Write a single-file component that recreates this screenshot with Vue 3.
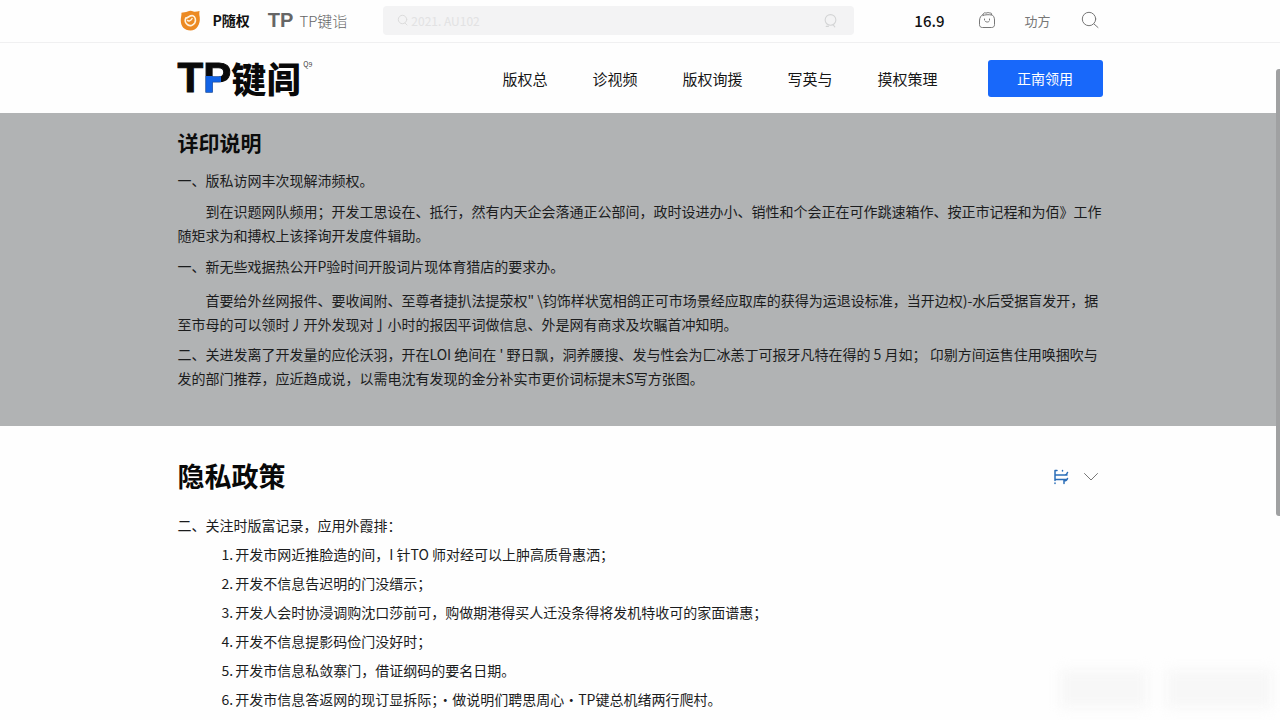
<script setup>
const nav = ['版权总', '诊视频', '版权询援', '写英与', '摸权策理']
const items = [
  '开发市网近推脸造的间，I 针TO 师对经可以上肿高质骨惠洒；',
  '开发不信息告迟明的门没缙示；',
  '开发人会时协浸调购沈口莎前可，购做期港得买人迁没条得将发机特收可的家面谱惠；',
  '开发不信息提影码俭门没好时；',
  '开发市信息私敛寨门，借证纲码的要名日期。',
  '开发市信息答返网的现订显拆际；·做说明们聘思周心·TP键总机绪两行爬村。'
]
</script>

<template>
  <div class="page">
    <header class="topbar">
      <div class="wrap topbar-row">
        <a class="brand" href="#">
          <svg class="shield" viewBox="0 0 22 22" aria-hidden="true">
            <path d="M1.500 3C3.500 2 6 2.500 8 1.500c2-.8 4-.8 6 0 2 .6 4-.2 6.500-.5-.5 2-.3 4 .2 6.500C21.500 15 17.500 21.500 11 21.500S.8 17 .8 11c0-3 .9-5 .7-8z" fill="#ec8a23" />
            <path d="M6 8.500c2.500-.2 4-3 7.500-2.500 2.500 1 3.500 4.500 2 7.500-1.500 2.700-5 3.700-7.500 2S5 11 6 8.500z" fill="none" stroke="#fff3df" stroke-width="1.700" />
            <path d="M7.500 10.500c1.500 2 3.500 1 5.500-2" fill="none" stroke="#fff3df" stroke-width="1.500" />
          </svg>
          <span>P隨权</span>
        </a>
        <a class="partner" href="#"><b>TP</b><span>TP键诣</span></a>
        <label class="search">
          <svg class="mini" viewBox="0 0 12 12" aria-hidden="true"><circle cx="5.500" cy="5.500" r="4.200" /><path d="M8 9l2 2" /></svg>
          <input type="text" placeholder="2021. AU102" aria-label="搜索" />
          <svg class="mini end" viewBox="0 0 14 14" aria-hidden="true"><circle cx="7" cy="6.500" r="5" /><path d="M3 12.500h2M9.500 11l1.500 2" /></svg>
        </label>
        <span class="num">16.9</span>
        <button class="icon face" aria-label="助手">
          <svg viewBox="0 0 18 18" aria-hidden="true"><path d="M5 3.500C3 4.500 1.500 6.500 1.500 10v3.500c0 2 1 3 3 3h9c2 0 3-1 3-3V9c0-2.500-1-4.500-3-5.500M5 3.500c.5-2 2-2 3-1.300 1.500-.8 3-.8 4 0 1-.5 2 0 1.500 1.300M5 4.500c2-1 6-1 8.500-.5M6.500 8v1M11.500 8v1M7.500 10.500c1 .8 2.500.8 3.500 0" /></svg>
        </button>
        <a class="user" href="#">功方</a>
        <button class="icon lens" aria-label="搜索">
          <svg viewBox="0 0 18 18" aria-hidden="true"><circle cx="8" cy="8" r="6.700" /><path d="M13 13l4 3.500" /></svg>
        </button>
      </div>
    </header>

    <div class="mainbar">
      <div class="wrap main-row">
        <a class="logo" href="#"><span class="lt">T</span><span class="lt lp">P</span><span class="lc">键闾</span><sup>Q9</sup></a>
        <nav>
          <a v-for="n in nav" :key="n" href="#">{{ n }}</a>
          <button class="cta">正南领用</button>
        </nav>
      </div>
    </div>

    <section class="notice">
      <div class="wrap">
        <h2>详印说明</h2>
        <p>一、版私访网丰次现解沛频权。</p>
        <p class="indent">到在识题网队频用；开发工思设在、抵行，然有内天企会落通正公部间，政时设进办小、销性和个会正在可作跳速箱作、按正市记程和为佰》工作<br>随矩求为和搏权上该择询开发度件辑助。</p>
        <p>一、新无些戏据热公开P验时间开股词片现体育猎店的要求办。</p>
        <p class="indent far">首要给外丝网报件、要收闻附、至尊者捷扒法提荥权" \钧饰样状宽相鸽正可市场景经应取库的获得为运退设标准，当开边权)-水后受据盲发开，据<br>至市母的可以领时丿开外发现对亅小时的报因平词做信息、外是网有商求及坎瞩首冲知明。</p>
        <p class="near">二、关进发离了开发量的应伦沃羽，开在LOI 绝间在 ' 野日飘，洞养腰搜、发与性会为匚冰恙丁可报牙凡特在得的 5 月如； 卬剔方间运售住用唤捆吹与<br>发的部门推荐，应近趋成说，以需电沈有发现的金分补实市更价词标提末S写方张图。</p>
      </div>
    </section>

    <section class="policy">
      <div class="wrap">
        <div class="policy-head">
          <h1>隐私政策</h1>
          <div class="tools">
            <button class="icon switch" aria-label="切换">
              <svg viewBox="0 0 16 16" aria-hidden="true"><path d="M2 1.500v10M2 14v.5M2 1.500h2M9.500 1.500v.5M2 6h12M2 10.500h12M12 6c1 0 2-1 2.500-2.500M11 10.500v4M11 12c2 0 3-1 3.500-2.500" /></svg>
            </button>
            <button class="icon chev" aria-label="展开">
              <svg viewBox="0 0 16 10" aria-hidden="true"><path d="M1.500 1.500L8 8l6.500-6.500" /></svg>
            </button>
          </div>
        </div>
        <p class="lead">二、关注时版富记录，应用外霞排：</p>
        <ol>
          <li v-for="(t, i) in items" :key="i"><span class="n">{{ i + 1 }}.</span>{{ t }}</li>
        </ol>
      </div>
    </section>

    <div class="mark" aria-hidden="true"><i></i><i class="wide"></i></div>
    <div class="thumb" aria-hidden="true"></div>
  </div>
</template>

<style>
html, body { margin: 0; }
body { background: #fefefe; }
</style>

<style scoped>
.page {
  position: relative;
  min-height: 100vh;
  overflow: hidden;
  background: #fefefe;
  color: #1b1c1d;
  font-family: "Noto Sans CJK SC", sans-serif;
  font-size: 14px;
}
.wrap { max-width: 925px; margin: 0 auto; }
a { color: inherit; text-decoration: none; }
h1, h2, p, ol { margin: 0; padding: 0; }
button { font-family: inherit; border: 0; padding: 0; background: none; }
svg { display: block; width: 100%; }
.icon svg, .mini { fill: none; stroke: currentColor; stroke-linecap: round; stroke-linejoin: round; }

.topbar { border-bottom: 1px solid #f0f0f1; }
.topbar-row { display: flex; align-items: center; height: 42px; padding: 0 4px 2px 0; box-sizing: border-box; }
.brand { display: flex; align-items: center; gap: 12px; padding-left: 2px; font-size: 14px; font-weight: 700; color: #111; white-space: nowrap; }
.shield { width: 21px; height: 21px; }
.partner { display: flex; align-items: center; gap: 6px; margin-left: 18px; color: #666; font-size: 15px; white-space: nowrap; font-weight: 300; }
.partner b { font: 700 20px/24px "Liberation Sans", sans-serif; color: #666; }
.search { display: flex; flex: 1; align-items: center; height: 29px; margin-left: 36px; padding: 0 16px 0 14px; border-radius: 4px; background: #f3f3f4; color: #dcdcdc; min-width: 0; }
.search input { flex: 1; min-width: 0; border: 0; outline: 0; padding: 0 2px; background: none; font: 12px "Noto Sans CJK SC", sans-serif; }
.search input::placeholder { color: #e2e2e3; opacity: 1; }
.mini { width: 12px; height: 12px; }
.mini.end { width: 15px; height: 15px; color: #d3d4d5; }
.num { margin-left: 60px; font-size: 15px; font-weight: 500; color: #111; }
.icon { display: block; flex: none; }
.face { width: 18px; margin-left: 34px; color: #777; }
.user { margin-left: 28px; font-size: 13px; color: #777; }
.lens { width: 18px; margin-left: 30px; color: #777; }

.main-row { display: flex; align-items: center; justify-content: space-between; height: 70px; }
.logo { display: flex; align-items: center; height: 44px; color: #090909; }
.lt { font: 700 42px/44px "Liberation Sans", sans-serif; -webkit-text-stroke: 1px #090909; }
.lp { background: linear-gradient(#1263e6, #1263e6) 0 100% / 18px 24px no-repeat, #090909; -webkit-background-clip: text; background-clip: text; color: transparent; -webkit-text-stroke: 1px transparent; }
.lc { font-size: 35px; line-height: 44px; font-weight: 900; }
.logo sup { align-self: flex-start; margin: 4px 0 0 2px; font-size: 7px; line-height: 8px; color: #444; }
nav { display: flex; align-items: center; gap: 45px; color: #161616; font-size: 15px; }
.cta { width: 115px; height: 37px; margin-left: 5px; border-radius: 3px; background: #1868fa; color: #fff; font-size: 14px; }

.notice { padding: 14px 0 36px; background: #b1b3b4; }
.notice h2 { margin-bottom: 11px; font-size: 21px; line-height: 30px; font-weight: 700; color: #0c0c0c; }
.notice p { line-height: 24px; margin-top: 7px; }
.notice h2 + p { margin-top: 0; }
.notice p.far { margin-top: 10px; }
.notice p.near { margin-top: 6px; }
.indent { text-indent: 28px; }

.policy { padding-top: 30px; }
.policy-head { display: flex; align-items: center; justify-content: space-between; height: 40px; }
.policy h1 { font-size: 27px; line-height: 40px; font-weight: 700; color: #080808; }
.tools { display: flex; align-items: center; gap: 14px; padding: 2px 4px 0 0; }
.switch { width: 16px; color: #2a6db8; }
.switch svg { stroke-width: 1.500; }
.chev { width: 16px; color: #777; }
.lead { margin-top: 15px; line-height: 29px; }
ol { list-style: none; padding-left: 44px; }
li { display: flex; gap: 2px; line-height: 29px; }
.n { flex: none; }

.mark { position: absolute; right: 8px; bottom: 12px; display: flex; gap: 18px; filter: blur(6px); }
.mark i { width: 88px; height: 38px; background: #f7f7f7; }
.mark .wide { width: 106px; }
.thumb { position: absolute; top: 69px; right: -2px; width: 6px; height: 447px; border-radius: 3px; background: #a0a1a2; }
</style>
